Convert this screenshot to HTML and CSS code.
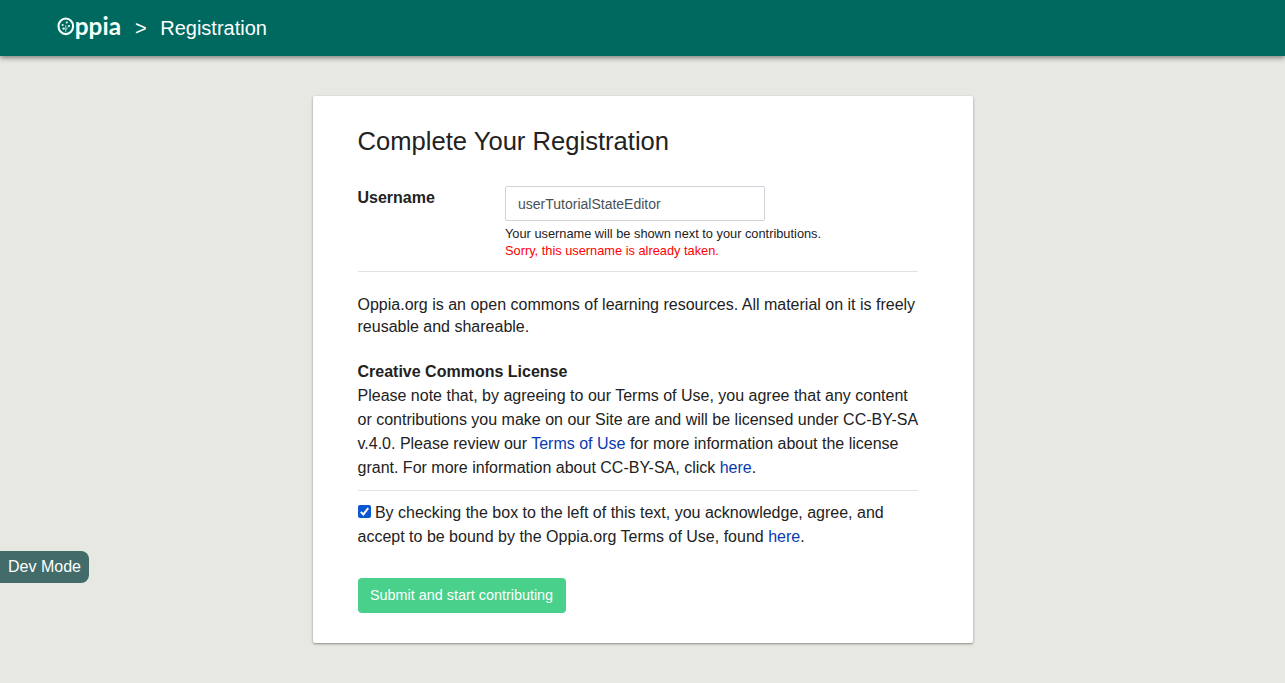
FILE: index.html
```html
<!DOCTYPE html>
<html lang="en">
<head>
<meta charset="utf-8">
<title>Registration</title>
<link rel="stylesheet" href="styles.css">
</head>
<body>
<header class="navbar">
  <svg class="logo" width="68" height="36" viewBox="0 0 68 36" role="img" aria-label="Oppia">
    <ellipse cx="9.8" cy="15.3" rx="7.3" ry="7.8" fill="none" stroke="#f4fffc" stroke-width="2.1"/>
    <g fill="#f4fffc">
      <circle cx="10.8" cy="11.4" r="1"/>
      <circle cx="6.6" cy="14" r="1"/>
      <circle cx="13" cy="15" r="1.1"/>
      <circle cx="7.6" cy="17.6" r="1.2"/>
    </g>
    <path d="M9.8 21V14M9.8 18.6l2.6-2.4" fill="none" stroke="#f4fffc" stroke-width=".7"/>
    <text class="logo-text" x="18.8" y="24.4" textLength="46.2" lengthAdjust="spacingAndGlyphs">ppia</text>
  </svg>
  <span class="separator">&gt;</span>
  <span class="page-name">Registration</span>
</header>
<main class="card">
  <h1 class="title">Complete Your Registration</h1>
  <form class="form">
    <div class="username-row">
      <label class="label" for="username">Username</label>
      <div class="field">
        <input class="input" id="username" type="text" value="userTutorialStateEditor">
        <span class="help">Your username will be shown next to your contributions.</span>
        <span class="help error">Sorry, this username is already taken.</span>
      </div>
    </div>
    <hr class="rule">
    <p class="intro">Oppia.org is an open commons of learning resources. All material on it is freely reusable and shareable.</p>
    <h2 class="subtitle">Creative Commons License</h2>
    <p class="license">Please note that, by agreeing to our Terms of Use, you agree that any content or contributions you make on our Site are and will be licensed under CC-BY-SA v.4.0. Please review our <a class="link" href="#">Terms of Use</a> for more information about the license grant. For more information about CC-BY-SA, click <a class="link" href="#">here</a>.</p>
    <hr class="rule">
    <label class="agree"><span class="checkbox"><svg width="13" height="13" viewBox="0 0 13 13"><path d="M2.8 6.9 5.3 9.4 10.2 3.2" fill="none" stroke="#fff" stroke-width="2"/></svg></span> By checking the box to the left of this text, you acknowledge, agree, and accept to be bound by the Oppia.org Terms of Use, found <a class="link" href="#">here</a>.</label>
    <button class="submit" type="button">Submit and start contributing</button>
  </form>
</main>
<div class="dev-mode">Dev Mode</div>
</body>
</html>
```
FILE: styles.css
```css
* { box-sizing: border-box; }
body {
  margin: 0;
  height: 683px;
  overflow: hidden;
  background: #e7e8e2;
  color: #222;
  font: 16px/24px "Liberation Sans", Arial, sans-serif;
}
.navbar {
  display: flex;
  align-items: center;
  height: 56px;
  padding-left: 56px;
  background: #00695f;
  color: #fff;
  font-size: 20px;
  box-shadow: 0 2px 5px rgba(0, 0, 0, .45);
}
.logo { display: block; margin-top: 1px; }
.logo-text { fill: #f4fffc; font: 700 25px Lato, sans-serif; }
.separator { margin-left: 11px; }
.page-name { margin-left: 13.5px; }
.card {
  width: 660px;
  height: 547px;
  margin: 40px auto 0;
  padding: 30px 55px 30px 45px;
  background: #fff;
  border-radius: 2px;
  box-shadow: 0 1px 3px rgba(0, 0, 0, .2), 0 1px 2px rgba(0, 0, 0, .24);
}
.title { margin: 0 0 29px; font-size: 25.6px; line-height: 31px; font-weight: 400; }
.username-row { display: flex; height: 85px; }
.label { width: 147.5px; font-weight: 700; }
.field { display: flex; flex-direction: column; }
.input {
  width: 260px;
  height: 35px;
  margin-bottom: 4px;
  padding: 0 12px;
  border: 1px solid #ced4da;
  border-radius: 2px;
  color: #495057;
  font: 14px "Liberation Sans", Arial, sans-serif;
}
.help { font-size: 12.8px; line-height: 17px; }
.error { color: #f00; }
.rule { margin: 0; border: 0; border-top: 1px solid #e2e2e2; }
.intro { margin: 22px 0; line-height: 22px; }
.subtitle { margin: 0; font-size: 16px; line-height: 24px; }
.license { margin: 0 0 10px; }
.link { color: #0a3ab0; text-decoration: none; }
.agree { display: block; margin: 10px 0 29px; }
.checkbox { display: inline-block; width: 13px; height: 13px; border-radius: 2px; background: #0b57d0; vertical-align: 0; }
.checkbox svg { display: block; }
.submit {
  width: 208px;
  height: 35px;
  padding: 0 0 2px;
  border: 0;
  border-radius: 4px;
  background: #49d18b;
  color: #fff;
  font: 14.4px "Liberation Sans", Arial, sans-serif;
}
.dev-mode {
  position: fixed;
  left: 0;
  top: 551px;
  height: 32px;
  padding: 4px 8px;
  border-radius: 0 8px 8px 0;
  background: #426b69;
  color: #fff;
}
```
